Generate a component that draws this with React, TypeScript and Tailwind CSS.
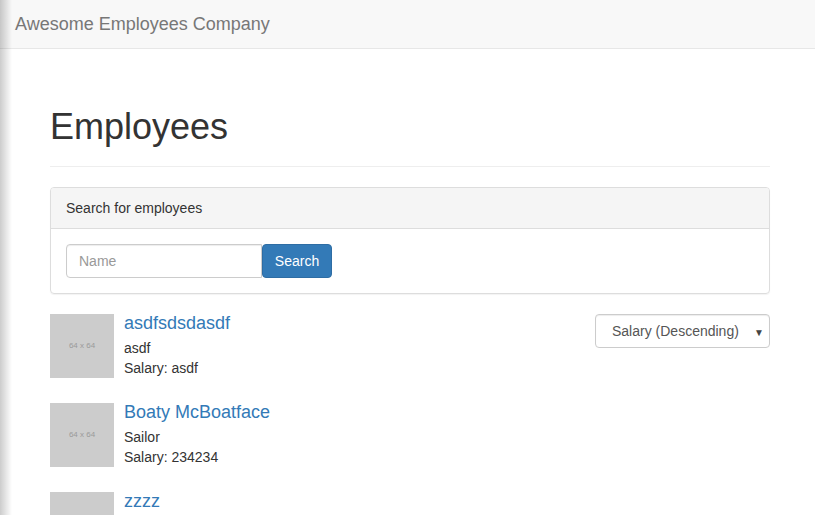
import React from "react"

const employees = [
  { name: "asdfsdsdasdf", title: "asdf", salary: "asdf" },
  { name: "Boaty McBoatface", title: "Sailor", salary: "234234" },
  { name: "zzzz", title: "zzzz", salary: "1" },
]

function Placeholder() {
  return (
    <div className="flex h-[64px] w-[64px] shrink-0 items-center justify-center bg-[#cccccc] text-[8px] text-[#9a9a9a]">
      64 x 64
    </div>
  )
}

export default function App() {
  return (
    <div
      className="relative min-h-[515px] overflow-hidden bg-white text-[14px] leading-[20px] text-[#333333]"
      style={{ fontFamily: '"Liberation Sans", Arial, sans-serif' }}
    >
      <div className="pointer-events-none absolute left-0 top-0 z-10 h-full w-[12px] bg-gradient-to-r from-black/20 to-transparent" />

      <nav className="flex h-[49px] items-center border-b border-[#e7e7e7] bg-[#f8f8f8] px-[15px]">
        <span className="text-[18px] leading-[20px] text-[#777777]">Awesome Employees Company</span>
      </nav>

      <main className="mx-[50px] w-[720px] pt-[58px]">
        <div className="border-b border-[#eeeeee] pb-[9px]">
          <h1 className="mb-[10px] text-[36px] leading-[39.6px] font-normal text-[#333333]">Employees</h1>
        </div>

        <section className="mt-[20px] rounded-[4px] border border-[#dddddd] shadow-[0_1px_1px_rgba(0,0,0,0.05)]">
          <div className="rounded-t-[3px] border-b border-[#dddddd] bg-[#f5f5f5] px-[15px] py-[10px]">
            Search for employees
          </div>
          <div className="flex p-[15px]">
            <input
              placeholder="Name"
              className="h-[34px] w-[196px] rounded-l-[4px] border border-[#cccccc] px-[12px] text-[14px] text-[#555555] placeholder:text-[#999999] shadow-[inset_0_1px_1px_rgba(0,0,0,0.075)] outline-none"
            />
            <button className="h-[34px] w-[70px] rounded-[4px] border border-[#2e6da4] bg-[#337ab7] text-[14px] text-white">
              Search
            </button>
          </div>
        </section>

        <div className="mt-[20px] flex items-start">
          <ul className="flex flex-1 flex-col gap-[24px]">
            {employees.map((e) => (
              <li key={e.name} className="flex h-[65px] gap-[10px]">
                <Placeholder />
                <div>
                  <h4 className="mb-[5px] text-[18px] leading-[19.8px] text-[#337ab7]">{e.name}</h4>
                  <div>{e.title}</div>
                  <div>Salary: {e.salary}</div>
                </div>
              </li>
            ))}
          </ul>
          <div className="relative flex h-[34px] w-[175px] items-center rounded-[4px] border border-[#cccccc] pl-[16px] text-[#555555] shadow-[inset_0_1px_1px_rgba(0,0,0,0.075)]">
            Salary (Descending)
            <span className="absolute right-[5px] top-[8px] text-[10px] text-[#444444]">▼</span>
          </div>
        </div>
      </main>
    </div>
  )
}
